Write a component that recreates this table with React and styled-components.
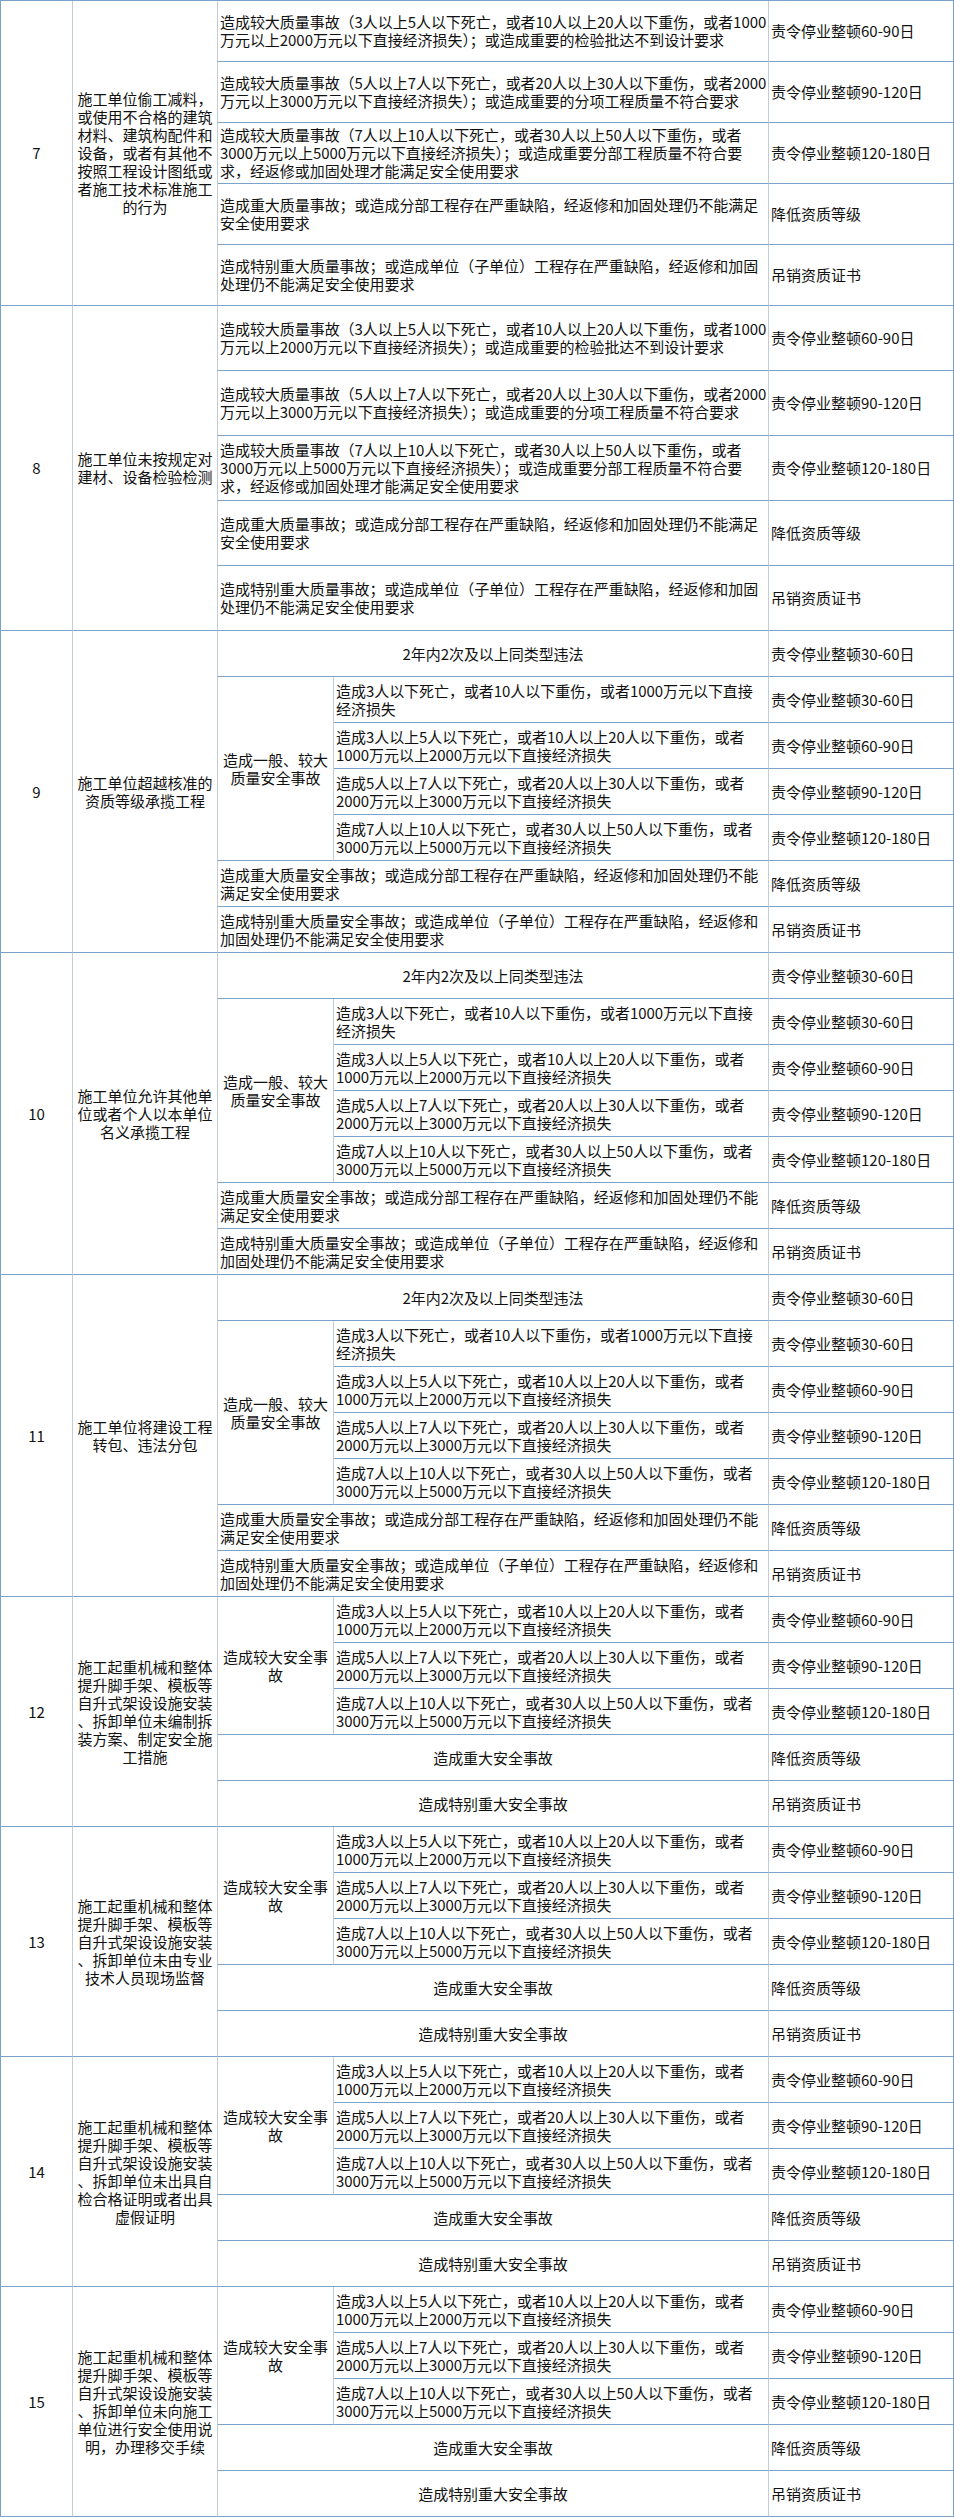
import React from 'react';
import styled, { createGlobalStyle } from 'styled-components';

const H_LINE = '#7ba3c8';
const V_LINE = '#c3ccd6';

const Global = createGlobalStyle`
  html, body { margin: 0; padding: 0; background: #ffffff; }
  body { font-family: "Noto Sans CJK SC", "Noto Sans", sans-serif; }
`;

const Table = styled.div`
  width: 954px;
  box-sizing: border-box;
  display: flex;
  flex-direction: column;
  border-top: 1px solid ${H_LINE};
  border-left: 1px solid ${H_LINE};
  background: #ffffff;
`;

const Group = styled.div`
  display: grid;
  grid-template-columns: 72px 145px 116px 435px 185px;
  grid-template-rows: repeat(${(p) => p.$rows}, ${(p) => p.$h}px);
`;

const Cell = styled.div`
  grid-column: ${(p) => p.$col};
  grid-row: ${(p) => p.$row};
  box-sizing: border-box;
  min-width: 0;
  display: flex;
  align-items: center;
  border-right: 1px solid ${V_LINE};
  border-bottom: 1px solid ${H_LINE};
  padding: 0 2px;
  font-size: 15px;
  line-height: 18px;
  color: #111;
  white-space: pre;
`;

const NumCell = styled(Cell)`
  justify-content: center;
  text-align: center;
`;

const SubjectCell = styled(Cell)`
  justify-content: center;
  text-align: center;
  padding: 0 4px;
`;

const CategoryCell = styled(Cell)`
  justify-content: center;
  text-align: center;
`;

const DescCell = styled(Cell)`
  justify-content: ${(p) => (p.$center ? 'center' : 'flex-start')};
  text-align: ${(p) => (p.$center ? 'center' : 'left')};
  letter-spacing: -0.05px;
`;

const PenaltyCell = styled(Cell)`
  justify-content: flex-start;
  border-right-color: ${H_LINE};
`;

const Q = [
  ['造成较大质量事故（3人以上5人以下死亡，或者10人以上20人以下重伤，或者1000\n万元以上2000万元以下直接经济损失）；或造成重要的检验批达不到设计要求', '责令停业整顿60-90日'],
  ['造成较大质量事故（5人以上7人以下死亡，或者20人以上30人以下重伤，或者2000\n万元以上3000万元以下直接经济损失）；或造成重要的分项工程质量不符合要求', '责令停业整顿90-120日'],
  ['造成较大质量事故（7人以上10人以下死亡，或者30人以上50人以下重伤，或者\n3000万元以上5000万元以下直接经济损失）；或造成重要分部工程质量不符合要\n求，经返修或加固处理才能满足安全使用要求', '责令停业整顿120-180日'],
  ['造成重大质量事故；或造成分部工程存在严重缺陷，经返修和加固处理仍不能满足\n安全使用要求', '降低资质等级'],
  ['造成特别重大质量事故；或造成单位（子单位）工程存在严重缺陷，经返修和加固\n处理仍不能满足安全使用要求', '吊销资质证书'],
];

const C1 = ['造成3人以下死亡，或者10人以下重伤，或者1000万元以下直接\n经济损失', '责令停业整顿30-60日'];
const C2 = ['造成3人以上5人以下死亡，或者10人以上20人以下重伤，或者\n1000万元以上2000万元以下直接经济损失', '责令停业整顿60-90日'];
const C3 = ['造成5人以上7人以下死亡，或者20人以上30人以下重伤，或者\n2000万元以上3000万元以下直接经济损失', '责令停业整顿90-120日'];
const C4 = ['造成7人以上10人以下死亡，或者30人以上50人以下重伤，或者\n3000万元以上5000万元以下直接经济损失', '责令停业整顿120-180日'];

const qualityEntries = Q.map(([text, pen]) => ({ kind: 'full', text, pen }));

const licenseEntries = [
  { kind: 'full', text: '2年内2次及以上同类型违法', pen: '责令停业整顿30-60日', center: true },
  { kind: 'nested', label: '造成一般、较大\n质量安全事故', items: [C1, C2, C3, C4] },
  { kind: 'full', text: '造成重大质量安全事故；或造成分部工程存在严重缺陷，经返修和加固处理仍不能\n满足安全使用要求', pen: '降低资质等级' },
  { kind: 'full', text: '造成特别重大质量安全事故；或造成单位（子单位）工程存在严重缺陷，经返修和\n加固处理仍不能满足安全使用要求', pen: '吊销资质证书' },
];

const craneEntries = [
  { kind: 'nested', label: '造成较大安全事\n故', items: [C2, C3, C4] },
  { kind: 'full', text: '造成重大安全事故', pen: '降低资质等级', center: true },
  { kind: 'full', text: '造成特别重大安全事故', pen: '吊销资质证书', center: true },
];

const CRANE = '施工起重机械和整体\n提升脚手架、模板等\n自升式架设设施安装\n';

const groups = [
  { no: '7', h: 61, subject: '施工单位偷工减料，\n或使用不合格的建筑\n材料、建筑构配件和\n设备，或者有其他不\n按照工程设计图纸或\n者施工技术标准施工\n的行为', entries: qualityEntries },
  { no: '8', h: 65, subject: '施工单位未按规定对\n建材、设备检验检测', entries: qualityEntries },
  { no: '9', h: 46, subject: '施工单位超越核准的\n资质等级承揽工程', entries: licenseEntries },
  { no: '10', h: 46, subject: '施工单位允许其他单\n位或者个人以本单位\n名义承揽工程', entries: licenseEntries },
  { no: '11', h: 46, subject: '施工单位将建设工程\n转包、违法分包', entries: licenseEntries },
  { no: '12', h: 46, subject: CRANE + '、拆卸单位未编制拆\n装方案、制定安全施\n工措施', entries: craneEntries },
  { no: '13', h: 46, subject: CRANE + '、拆卸单位未由专业\n技术人员现场监督', entries: craneEntries },
  { no: '14', h: 46, subject: CRANE + '、拆卸单位未出具自\n检合格证明或者出具\n虚假证明', entries: craneEntries },
  { no: '15', h: 46, subject: CRANE + '、拆卸单位未向施工\n单位进行安全使用说\n明，办理移交手续', entries: craneEntries },
];

const countRows = (entries) =>
  entries.reduce((n, e) => n + (e.kind === 'nested' ? e.items.length : 1), 0);

function PenaltyGroup({ group }) {
  const total = countRows(group.entries);
  const cells = [];
  let r = 1;
  group.entries.forEach((e, i) => {
    if (e.kind === 'full') {
      cells.push(
        <DescCell key={`d${i}`} $col="3 / 5" $row={`${r} / span 1`} $center={e.center}>
          {e.text}
        </DescCell>,
        <PenaltyCell key={`p${i}`} $col="5 / 6" $row={`${r} / span 1`}>
          {e.pen}
        </PenaltyCell>
      );
      r += 1;
    } else {
      cells.push(
        <CategoryCell key={`c${i}`} $col="3 / 4" $row={`${r} / span ${e.items.length}`}>
          {e.label}
        </CategoryCell>
      );
      e.items.forEach(([text, pen], j) => {
        cells.push(
          <DescCell key={`d${i}-${j}`} $col="4 / 5" $row={`${r + j} / span 1`}>
            {text}
          </DescCell>,
          <PenaltyCell key={`p${i}-${j}`} $col="5 / 6" $row={`${r + j} / span 1`}>
            {pen}
          </PenaltyCell>
        );
      });
      r += e.items.length;
    }
  });

  return (
    <Group $rows={total} $h={group.h}>
      <NumCell $col="1 / 2" $row={`1 / span ${total}`}>{group.no}</NumCell>
      <SubjectCell $col="2 / 3" $row={`1 / span ${total}`}>{group.subject}</SubjectCell>
      {cells}
    </Group>
  );
}

export default function App() {
  return (
    <>
      <Global />
      <Table>
        {groups.map((g) => (
          <PenaltyGroup key={g.no} group={g} />
        ))}
      </Table>
    </>
  );
}
